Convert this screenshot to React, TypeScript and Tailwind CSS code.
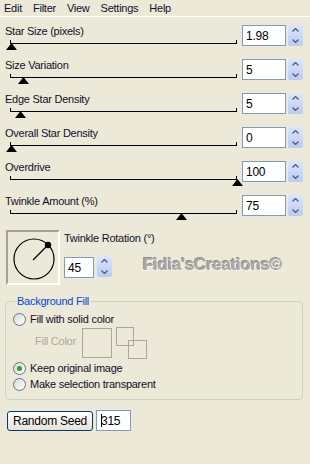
import React from "react";

type SliderRow = {
    label: string;
    value: string;
    thumb: number; // px from left end of the track
};

const rows: SliderRow[] = [
    { label: "Star Size (pixels)", value: "1.98", thumb: 0 },
    { label: "Size Variation", value: "5", thumb: 12 },
    { label: "Edge Star Density", value: "5", thumb: 9 },
    { label: "Overall Star Density", value: "0", thumb: 0 },
    { label: "Overdrive", value: "100", thumb: 226 },
    { label: "Twinkle Amount (%)", value: "75", thumb: 170 },
];

const Spinner = ({ className = "" }: { className?: string }) => (
    <div className={`flex flex-col w-[15px] h-[21px] rounded-[2px] bg-gradient-to-b from-[#DCE5FB] to-[#BACBF3] ${className}`}>
        <div className="flex-1 flex items-center justify-center">
            <svg width="7" height="4" viewBox="0 0 7 4"><path d="M0.5 3.5 L3.5 0.5 L6.5 3.5" fill="none" stroke="#4D6185" strokeWidth="1.4" /></svg>
        </div>
        <div className="flex-1 flex items-center justify-center">
            <svg width="7" height="4" viewBox="0 0 7 4"><path d="M0.5 0.5 L3.5 3.5 L6.5 0.5" fill="none" stroke="#4D6185" strokeWidth="1.4" /></svg>
        </div>
    </div>
);

const NumBox = ({ value, width }: { value: string; width: string }) => (
    <div className={`${width} h-[21px] border border-[#7F9DB9] bg-white pl-[3px] flex items-center text-[12px] text-black`}>{value}</div>
);

const Radio = ({ checked = false }: { checked?: boolean }) => (
    <div className="w-[13px] h-[13px] rounded-full border border-[#5A7593] bg-gradient-to-br from-[#DCD9D0] to-white flex items-center justify-center">
        {checked && <div className="w-[5px] h-[5px] rounded-full bg-[#29A329]" />}
    </div>
);

const App = () => {
    return (
        <div className="w-[310px] h-[464px] bg-[#ECE9D8] text-[11px] tracking-[-0.25px] text-[#10102A] overflow-hidden" style={{ fontFamily: '"Liberation Sans", Arial, sans-serif' }}>
            {/* menu */}
            <div className="h-[17px] flex items-center gap-[11px] pl-[4px] border-b border-white">
                <span>Edit</span>
                <span>Filter</span>
                <span>View</span>
                <span>Settings</span>
                <span>Help</span>
            </div>

            <div className="pt-[5px] px-[5px]">
                {rows.map((r) => (
                    <div key={r.label} className="flex h-[34px]">
                        <div className="w-[237px]">
                            <div className="mt-[2px] h-[14px] leading-[14px] whitespace-nowrap">{r.label}</div>
                            <div className="relative ml-[5px] mt-[2px] w-[227px] h-[4px] border-b border-x border-black">
                                <svg className="absolute top-[3px]" style={{ left: r.thumb - 5 }} width="11" height="7" viewBox="0 0 11 7">
                                    <polygon points="5.5,0 11,7 0,7" fill="#000" />
                                </svg>
                            </div>
                        </div>
                        <div className="mt-[3px] flex gap-[2px]">
                            <NumBox value={r.value} width="w-[44px]" />
                            <Spinner />
                        </div>
                    </div>
                ))}
            </div>

            {/* rotation dial */}
            <div className="flex h-[68px] pt-[4px] pl-[6px]">
                <div className="w-[54px] h-[55px] border-t-2 border-l-2 border-[#A5A295] border-b-2 border-r-2 border-b-white border-r-white flex items-center justify-center">
                    <svg width="48" height="48" viewBox="0 0 48 48">
                        <circle cx="25" cy="25" r="20" fill="none" stroke="#000" strokeWidth="1.2" />
                        <line x1="24" y1="26" x2="39" y2="11" stroke="#000" strokeWidth="1.2" />
                        <circle cx="39" cy="11" r="3.2" fill="#000" />
                    </svg>
                </div>
                <div className="w-[75px] ml-[4px]">
                    <div className="mt-[1px] h-[14px] leading-[14px] whitespace-nowrap">Twinkle Rotation (°)</div>
                    <div className="mt-[12px] flex gap-[3px] items-start">
                        <NumBox value="45" width="w-[30px]" />
                        <Spinner className="-mt-[1px]" />
                    </div>
                </div>
                <div className="ml-[4px] mt-[22px] text-[17px] font-bold tracking-[-0.3px] text-[#ABA9A4] whitespace-nowrap [text-shadow:1px_1px_0_#F4F3EE,-1px_-1px_0_#8E8C86]">
                    Fidia'sCreations©
                </div>
            </div>

            {/* background fill group */}
            <fieldset className="mx-[5px] w-[298px] h-[106px] border border-[#D0D0BF] rounded-[4px] px-[7px]">
                <legend className="ml-[2px] px-[2px] text-[#0046D5] leading-[14px]">Background Fill</legend>
                <div className="flex items-center gap-[4px] h-[16px] mt-[3px]">
                    <Radio />
                    <span>Fill with solid color</span>
                </div>
                <div className="flex h-[32px]">
                    <span className="ml-[22px] mt-[7px] text-[#ACA899] leading-[14px]">Fill Color</span>
                    <div className="ml-[6px] mt-[1px] w-[30px] h-[30px] border border-[#ACA899]" />
                    <div className="relative ml-[4px] w-[31px] h-[32px]">
                        <div className="absolute left-0 top-0 w-[18px] h-[19px] border border-[#ACA899]" />
                        <div className="absolute left-[12px] top-[13px] w-[19px] h-[19px] border border-[#ACA899]" />
                    </div>
                </div>
                <div className="flex items-center gap-[4px] h-[16px] mt-[1px]">
                    <Radio checked />
                    <span>Keep original image</span>
                </div>
                <div className="flex items-center gap-[4px] h-[16px]">
                    <Radio />
                    <span>Make selection transparent</span>
                </div>
            </fieldset>

            {/* seed */}
            <div className="flex items-start mt-[10px] ml-[7px] gap-[3px]">
                <button className="w-[86px] h-[20px] mt-[1px] rounded-[3px] border border-[#003C74] bg-gradient-to-b from-white to-[#E6E3D8] text-[12px] text-black">Random Seed</button>
                <div className="w-[35px] h-[21px] border border-[#7F9DB9] bg-white flex items-center pl-[4px] text-[12px] text-black">
                    <span className="w-px h-[13px] bg-black mr-[-1px]" />315
                </div>
            </div>
        </div>
    );
};

export default App;
